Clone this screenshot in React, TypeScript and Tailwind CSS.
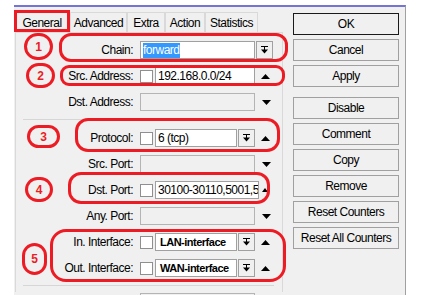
import type { ReactNode } from "react";

const FONT = "font-['Liberation_Sans',Arial,sans-serif]";

function DropIcon() {
  return (
    <svg width="7" height="8" viewBox="0 0 7 8" className="block">
      <rect x="0" y="0" width="7" height="1" fill="#000" />
      <rect x="3" y="1" width="1" height="3" fill="#000" />
      <path d="M0 3.5 H7 L3.5 7.5 Z" fill="#000" />
    </svg>
  );
}

function Arrow({ up, small }: { up?: boolean; small?: boolean }) {
  const w = small ? 6 : 9;
  const h = small ? 4 : 5;
  return (
    <svg width={w} height={h} viewBox={`0 0 ${w} ${h}`} className="block">
      {up ? (
        <path d={`M0 ${h} H${w} L${w / 2} 0 Z`} fill="#000" />
      ) : (
        <path d={`M0 0 H${w} L${w / 2} ${h} Z`} fill="#000" />
      )}
    </svg>
  );
}

function DropButton() {
  return (
    <div className="flex h-[18px] w-[17px] items-center justify-center border border-[#a0a0a0] bg-[#f0f0f0]">
      <DropIcon />
    </div>
  );
}

function Check() {
  return <div className="h-[13px] w-[13px] border border-[#8f8f8f] bg-white" />;
}

function Box({
  w,
  children,
  disabled,
  bold,
}: {
  w: string;
  children?: ReactNode;
  disabled?: boolean;
  bold?: boolean;
}) {
  return (
    <div
      className={`flex h-[18px] items-center overflow-hidden whitespace-nowrap border pl-[2px] ${w} ${
        disabled ? "border-[#b4b4b4] bg-[#f0f0f0]" : "border-[#a0a0a0] bg-white"
      } ${bold ? "pl-[4px] text-[11px] font-bold tracking-[-0.5px]" : ""}`}
    >
      {children}
    </div>
  );
}

function Row({ label, children, className = "" }: { label: string; children: ReactNode; className?: string }) {
  return (
    <div className={`flex h-[20px] items-center ${className}`}>
      <div className="w-[117px] whitespace-nowrap text-right leading-none">{label}</div>
      <div className="ml-[7px] flex items-center">{children}</div>
    </div>
  );
}

function Separator({ className = "" }: { className?: string }) {
  return <div className={`ml-[7px] h-px w-[251px] bg-[#d6d6d6] ${className}`} />;
}

function Btn({ label, primary, className = "" }: { label: string; primary?: boolean; className?: string }) {
  return (
    <div
      className={`flex h-[22px] w-[106px] items-center justify-center whitespace-nowrap border bg-[#f0f0f0] leading-none ${
        primary ? "border-[#1a1a1a]" : "border-[#a0a0a0]"
      } ${className}`}
    >
      {label}
    </div>
  );
}

const TABS = [
  { name: "General", w: "w-[56px]" },
  { name: "Advanced", w: "w-[57px]" },
  { name: "Extra", w: "w-[38px]" },
  { name: "Action", w: "w-[40px]" },
  { name: "Statistics", w: "w-[53px]" },
];

function Mark({ className, children }: { className: string; children?: ReactNode }) {
  return (
    <div
      className={`pointer-events-none absolute flex items-center justify-center border-[3px] border-[#ed1c24] text-[12px] font-bold tracking-normal text-[#ed1c24] ${className}`}
    >
      {children}
    </div>
  );
}

export default function App() {
  return (
    <div
      className={`relative h-[295px] w-[423px] overflow-hidden bg-white pl-[14px] pt-[5px] text-[12px] tracking-[-0.5px] text-black ${FONT}`}
    >
      <div className="flex h-[290px] w-[392px] border-r border-t-2 border-r-[#a0a0a0] border-t-[#7474d6] bg-[#f0f0f0]">
        {/* tabs + form */}
        <div className="w-[269px] pt-[5px]">
          <div className="flex h-[20px]">
            {TABS.map((t) => (
              <div
                key={t.name}
                className={`flex h-full items-center justify-center border border-b-0 border-[#d9d9d9] leading-none ${t.w}`}
              >
                {t.name}
              </div>
            ))}
          </div>
          <div className="ml-px h-[260px] w-[268px] border border-b-0 border-[#d9d9d9] pt-[7px]">
            <Row label="Chain:">
              <Box w="w-[115px]">
                <span className="bg-[#3399ff] leading-[15px] text-white">forward</span>
              </Box>
              <div className="ml-px">
                <DropButton />
              </div>
            </Row>
            <Row label="Src. Address:" className="mt-[6px]">
              <Check />
              <div className="ml-[2px]">
                <Box w="w-[100px]">192.168.0.0/24</Box>
              </div>
              <div className="ml-[6px]">
                <Arrow up />
              </div>
            </Row>
            <Row label="Dst. Address:" className="mt-[6px]">
              <Box w="w-[115px]" disabled />
              <div className="ml-[7px]">
                <Arrow />
              </div>
            </Row>
            <Separator className="mt-[7px]" />
            <Row label="Protocol:" className="mt-[8px]">
              <Check />
              <div className="ml-[2px]">
                <Box w="w-[82px]">6 (tcp)</Box>
              </div>
              <div className="ml-px">
                <DropButton />
              </div>
              <div className="ml-[6px]">
                <Arrow up />
              </div>
            </Row>
            <Row label="Src. Port:" className="mt-[6px]">
              <Box w="w-[115px]" disabled />
              <div className="ml-[7px]">
                <Arrow />
              </div>
            </Row>
            <Row label="Dst. Port:" className="mt-[6px]">
              <Check />
              <div className="ml-[2px]">
                <Box w="w-[104px]">30100-30110,5001,5</Box>
              </div>
              <div className="ml-[3px]">
                <Arrow up small />
              </div>
            </Row>
            <Row label="Any. Port:" className="mt-[6px]">
              <Box w="w-[115px]" disabled />
              <div className="ml-[7px]">
                <Arrow />
              </div>
            </Row>
            <Row label="In. Interface:" className="mt-[6px]">
              <Check />
              <div className="ml-[2px]">
                <Box w="w-[82px]" bold>
                  LAN-interface
                </Box>
              </div>
              <div className="ml-px">
                <DropButton />
              </div>
              <div className="ml-[6px]">
                <Arrow up />
              </div>
            </Row>
            <Row label="Out. Interface:" className="mt-[6px]">
              <Check />
              <div className="ml-[2px]">
                <Box w="w-[82px]" bold>
                  WAN-interface
                </Box>
              </div>
              <div className="ml-px">
                <DropButton />
              </div>
              <div className="ml-[6px]">
                <Arrow up />
              </div>
            </Row>
            <Separator className="mt-[7px]" />
            <div className="ml-[124px] mt-[7px] h-[18px] w-[115px] border border-[#b4b4b4]" />
          </div>
        </div>

        {/* buttons */}
        <div className="ml-[10px] flex flex-col pt-[6px]">
          <Btn label="OK" primary />
          <Btn label="Cancel" className="mt-[4px]" />
          <Btn label="Apply" className="mt-[4px]" />
          <Btn label="Disable" className="mt-[10px]" />
          <Btn label="Comment" className="mt-[4px]" />
          <Btn label="Copy" className="mt-[4px]" />
          <Btn label="Remove" className="mt-[4px]" />
          <Btn label="Reset Counters" className="mt-[4px]" />
          <Btn label="Reset All Counters" className="mt-[4px]" />
        </div>
      </div>

      {/* red annotations */}
      <Mark className="left-[14px] top-[10px] h-[22px] w-[56px]" />
      <Mark className="left-[24px] top-[33px] h-[27px] w-[29px] rounded-full">1</Mark>
      <Mark className="left-[59px] top-[33px] h-[29px] w-[229px] rounded-[12px]" />
      <Mark className="left-[26px] top-[63px] h-[25px] w-[29px] rounded-full">2</Mark>
      <Mark className="left-[60px] top-[65px] h-[21px] w-[225px] rounded-[9px]" />
      <Mark className="left-[27px] top-[125px] h-[23px] w-[33px] rounded-full">3</Mark>
      <Mark className="left-[75px] top-[118px] h-[34px] w-[205px] rounded-[13px]" />
      <Mark className="left-[25px] top-[177px] h-[25px] w-[28px] rounded-full">4</Mark>
      <Mark className="left-[68px] top-[172px] h-[32px] w-[202px] rounded-[13px]" />
      <Mark className="left-[22px] top-[243px] h-[32px] w-[25px] rounded-full">5</Mark>
      <Mark className="left-[50px] top-[229px] h-[53px] w-[236px] rounded-[16px]" />
    </div>
  );
}
